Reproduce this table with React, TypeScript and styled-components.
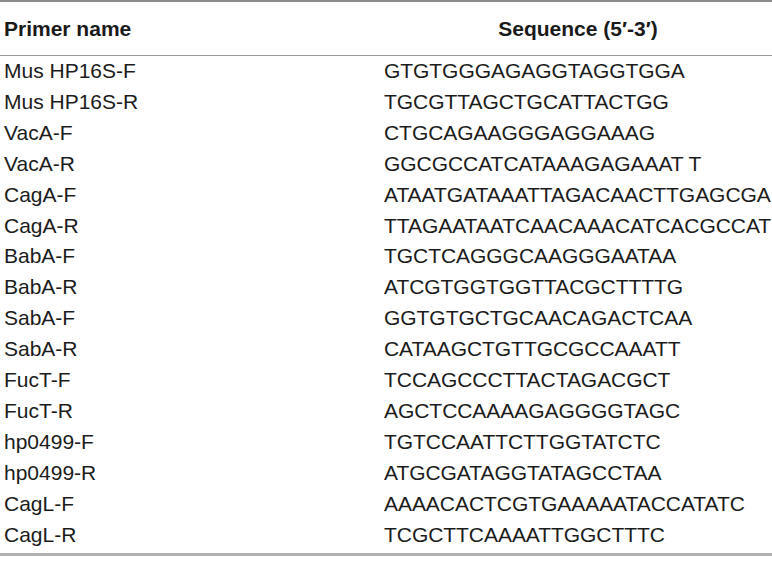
import React from "react";
import styled, { createGlobalStyle } from "styled-components";

const Global = createGlobalStyle`
  html, body { margin: 0; padding: 0; background: #fff; }
  body { font-family: "Liberation Sans", Arial, sans-serif; color: #1c1c1c; }
`;

const Table = styled.table`
  width: 772px;
  border-collapse: collapse;
  border-top: 2px solid #8a8a8a;
  border-bottom: 3px solid #b0b0b0;
  font-size: 21px;
`;

const HeadCell = styled.th<{ $center?: boolean }>`
  font-weight: bold;
  text-align: ${(p) => (p.$center ? "center" : "left")};
  padding: 14px 0 13px ${(p) => (p.$center ? "0" : "4px")};
  line-height: 26px;
  border-bottom: 1px solid #999;
  color: #1a1a1a;
`;

const Cell = styled.td<{ $seq?: boolean; $first?: boolean; $last?: boolean }>`
  padding: 0 0 ${(p) => (p.$last ? "2px" : "0")} ${(p) => (p.$seq ? "0" : "4px")};
  line-height: 30.9px;
  width: ${(p) => (p.$seq ? "388px" : "384px")};
  white-space: nowrap;
  letter-spacing: ${(p) => (p.$seq ? "-0.05px" : "0")};
  color: #1c1c1c;
`;

const rows: [string, string][] = [
  ["Mus HP16S-F", "GTGTGGGAGAGGTAGGTGGA"],
  ["Mus HP16S-R", "TGCGTTAGCTGCATTACTGG"],
  ["VacA-F", "CTGCAGAAGGGAGGAAAG"],
  ["VacA-R", "GGCGCCATCATAAAGAGAAAT T"],
  ["CagA-F", "ATAATGATAAATTAGACAACTTGAGCGA"],
  ["CagA-R", "TTAGAATAATCAACAAACATCACGCCAT"],
  ["BabA-F", "TGCTCAGGGCAAGGGAATAA"],
  ["BabA-R", "ATCGTGGTGGTTACGCTTTTG"],
  ["SabA-F", "GGTGTGCTGCAACAGACTCAA"],
  ["SabA-R", "CATAAGCTGTTGCGCCAAATT"],
  ["FucT-F", "TCCAGCCCTTACTAGACGCT"],
  ["FucT-R", "AGCTCCAAAAGAGGGGTAGC"],
  ["hp0499-F", "TGTCCAATTCTTGGTATCTC"],
  ["hp0499-R", "ATGCGATAGGTATAGCCTAA"],
  ["CagL-F", "AAAACACTCGTGAAAAATACCATATC"],
  ["CagL-R", "TCGCTTCAAAATTGGCTTTC"],
];

export default function App() {
  return (
    <>
      <Global />
      <Table>
        <thead>
          <tr>
            <HeadCell>Primer name</HeadCell>
            <HeadCell $center>Sequence (5′-3′)</HeadCell>
          </tr>
        </thead>
        <tbody>
          {rows.map(([n, s], i) => (
            <tr key={n}>
              <Cell $last={i === rows.length - 1}>{n}</Cell>
              <Cell $seq $last={i === rows.length - 1}>{s}</Cell>
            </tr>
          ))}
        </tbody>
      </Table>
    </>
  );
}
